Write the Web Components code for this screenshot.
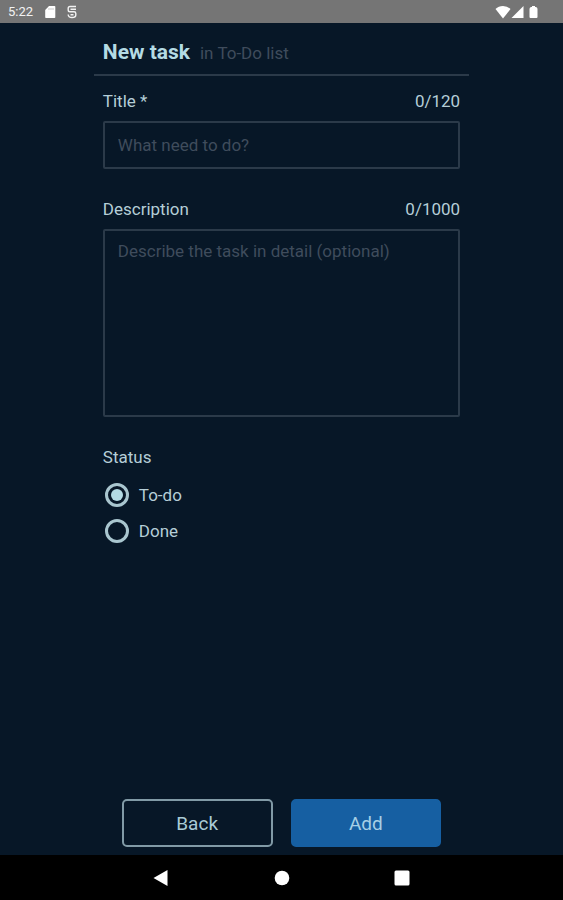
<!DOCTYPE html>
<html lang="en">
<head>
<meta charset="utf-8">
<meta name="viewport" content="width=device-width, initial-scale=1">
<title>New task</title>
<style>
	html {
		height: 100%;
	}
	body {
		margin: 0;
		height: 100%;
		background: #071727;
		color: #b5ced7;
		font: 17px/20px Roboto, "Liberation Sans", sans-serif;
		--accent: #b4dbe4;
		--muted: #3f4c5c;
		--line: #2b3a49;
		--primary: #165fa2;
	}
</style>
</head>
<body>
<task-screen>
	<status-bar slot="top" time="5:22"></status-bar>
	<page-header>New task<span slot="note">in To-Do list</span></page-header>
	<task-field label="Title *" placeholder="What need to do?" maxlength="120"></task-field>
	<task-field label="Description" placeholder="Describe the task in detail (optional)" maxlength="1000" multiline></task-field>
	<radio-list label="Status" options="To-do,Done" value="To-do"></radio-list>
	<action-button slot="actions">Back</action-button>
	<action-button slot="actions" primary>Add</action-button>
	<nav-bar slot="bottom"></nav-bar>
</task-screen>

<script>
'use strict'

class TaskScreen extends HTMLElement {
	constructor() {
		super()
		this.attachShadow({ mode: 'open' }).innerHTML = `
			<style>
				:host {
					display: flex;
					flex-direction: column;
					min-height: 100%;
				}
				main {
					flex: 1;
					display: flex;
					flex-direction: column;
					width: calc(100% * 2 / 3);
					margin: 0 auto;
				}
				.form {
					display: flex;
					flex-direction: column;
				}
				.actions {
					display: flex;
					gap: 18px;
					margin-top: auto;
					padding: 24px 28px 8px;
				}
			</style>
			<slot name="top"></slot>
			<main>
				<div class="form"><slot></slot></div>
				<div class="actions"><slot name="actions"></slot></div>
			</main>
			<slot name="bottom"></slot>`
	}
}

class StatusBar extends HTMLElement {
	constructor() {
		super()
		this.attachShadow({ mode: 'open' }).innerHTML = `
			<style>
				:host {
					display: flex;
					align-items: center;
					justify-content: space-between;
					height: 23px;
					padding: 0 24px 0 8px;
					background: #757575;
					color: #f2f2f2;
					font-size: 13px;
				}
				div {
					display: flex;
					align-items: center;
				}
				svg {
					display: block;
					fill: #fff;
				}
				.notices {
					gap: 11px;
				}
			</style>
			<div class="notices">
				<time></time>
				<svg width="12" height="14" viewBox="0 0 12 14"><path d="M5 1h5.500q.8 0 .8.800v10.400q0 .8-.8.800h-8.500q-.8 0-.8-.800v-7.200z"/><path d="M5 3v2M7 3v2M9 3v2" stroke="#bbb" stroke-width=".8"/></svg>
				<svg width="10" height="14" viewBox="0 0 10 14"><path d="M9 1.500H3Q1.200 1.500 1.200 3.300V5Q1.200 6.800 3 6.800H7Q8.800 6.800 8.800 8.500V10Q8.800 12.500 5 12.500T1.200 9.500M3.500 4.200H9M3.500 9.700H6.500" fill="none" stroke="#f2f2f2" stroke-width="1.400"/></svg>
			</div>
			<div>
				<svg width="16" height="14" viewBox="0 0 16 14"><path d="M8 13.500 0.500 4Q3.500 1 8 1t7.500 3z"/></svg>
				<svg width="13" height="14" viewBox="0 0 13 14"><path d="M12.500 1v12H.5z"/></svg>
				<svg width="15" height="14" viewBox="0 0 15 14"><path d="M8 1h3v1h1q1.500.3 1.500 2v8q0 1-1 1h-6q-1 0-1-1V4q0-1.700 1.500-2h1z"/></svg>
			</div>`
	}

	connectedCallback() {
		this.shadowRoot.querySelector('time').textContent = this.getAttribute('time')
	}
}

class PageHeader extends HTMLElement {
	constructor() {
		super()
		this.attachShadow({ mode: 'open' }).innerHTML = `
			<style>
				:host {
					display: block;
					border-bottom: 2px solid var(--line);
				}
				header {
					display: flex;
					align-items: baseline;
					gap: 10px;
					padding: 17px 9px 9px;
					line-height: 24px;
				}
				h1 {
					margin: 0;
					color: var(--accent);
					font-size: 21px;
					font-weight: 700;
				}
				.note {
					color: var(--muted);
				}
			</style>
			<header>
				<h1><slot></slot></h1>
				<span class="note"><slot name="note"></slot></span>
			</header>`
	}
}

class TaskField extends HTMLElement {
	constructor() {
		super()
		this.attachShadow({ mode: 'open' }).innerHTML = `
			<style>
				* {
					box-sizing: border-box;
				}
				:host {
					display: block;
					padding: 15px 9px;
				}
				.head {
					display: flex;
					justify-content: space-between;
					margin-bottom: 10px;
				}
				input, textarea {
					display: block;
					width: 100%;
					height: 48px;
					margin: 0;
					padding: 0 13px;
					border: 2px solid var(--line);
					border-radius: 2px;
					outline: none;
					background: none;
					color: inherit;
					font: inherit;
				}
				textarea {
					height: 188px;
					padding: 10px 13px;
					resize: none;
				}
				:focus {
					border-color: var(--accent);
				}
				::placeholder {
					color: var(--muted);
					opacity: 1;
				}
			</style>
			<div class="head">
				<label for="control"></label>
				<output for="control"></output>
			</div>`
	}

	#control

	#updateCount() {
		this.shadowRoot.querySelector('output').textContent = `${this.#control.value.length}/${this.getAttribute('maxlength')}`
	}

	connectedCallback() {
		if (this.#control) {
			return
		}
		this.#control = document.createElement(this.hasAttribute('multiline') ? 'textarea' : 'input')
		this.#control.id = 'control'
		this.#control.placeholder = this.getAttribute('placeholder')
		this.#control.maxLength = this.getAttribute('maxlength')
		this.#control.addEventListener('input', () => this.#updateCount())
		this.shadowRoot.querySelector('label').textContent = this.getAttribute('label')
		this.shadowRoot.append(this.#control)
		this.#updateCount()
	}
}

class RadioList extends HTMLElement {
	constructor() {
		super()
		this.attachShadow({ mode: 'open' }).innerHTML = `
			<style>
				:host {
					display: block;
					padding: 15px 9px;
				}
				fieldset {
					min-width: 0;
					margin: 0;
					padding: 0;
					border: 0;
				}
				legend {
					padding: 0;
					margin-bottom: 10px;
				}
				label {
					display: flex;
					align-items: center;
					gap: 10px;
					height: 36px;
					padding-left: 2px;
				}
				input {
					appearance: none;
					display: grid;
					place-items: center;
					box-sizing: border-box;
					width: 24px;
					height: 24px;
					margin: 0;
					border: 3px solid #a9c6cf;
					border-radius: 50%;
				}
				input:checked::before {
					content: "";
					width: 12px;
					height: 12px;
					border-radius: 50%;
					background: var(--accent);
				}
			</style>
			<fieldset><legend></legend></fieldset>`
	}

	connectedCallback() {
		const fieldset = this.shadowRoot.querySelector('fieldset')
		fieldset.firstChild.textContent = this.getAttribute('label')
		for (const option of this.getAttribute('options').split(',')) {
			const label = document.createElement('label')
			const input = document.createElement('input')
			input.type = 'radio'
			input.name = 'option'
			input.value = option
			input.checked = option === this.getAttribute('value')
			label.append(input, option)
			fieldset.append(label)
		}
	}
}

class ActionButton extends HTMLElement {
	constructor() {
		super()
		this.attachShadow({ mode: 'open' }).innerHTML = `
			<style>
				:host {
					display: block;
					flex: 1;
				}
				button {
					display: block;
					box-sizing: border-box;
					width: 100%;
					height: 48px;
					padding: 2px 0 0;
					border: 2px solid #819aa6;
					border-radius: 5px;
					background: none;
					color: #a9cbd6;
					font: inherit;
					font-size: 19px;
					cursor: pointer;
				}
				:host([primary]) button {
					border-color: var(--primary);
					background: var(--primary);
					color: #a6cfe6;
				}
			</style>
			<button type="button"><slot></slot></button>`
	}
}

class NavBar extends HTMLElement {
	constructor() {
		super()
		this.attachShadow({ mode: 'open' }).innerHTML = `
			<style>
				:host {
					display: block;
				}
				nav {
					display: flex;
					align-items: center;
					justify-content: center;
					gap: 96px;
					height: 45px;
					background: #000;
				}
				button {
					width: 24px;
					height: 24px;
					padding: 0;
					border: 0;
					background: none;
				}
				svg {
					display: block;
					fill: #fff;
				}
			</style>
			<nav>
				<button type="button" aria-label="Back"><svg width="24" height="24"><path d="M3.500 12 17.500 4v16z"/></svg></button>
				<button type="button" aria-label="Home"><svg width="24" height="24"><circle cx="12" cy="12" r="7.300"/></svg></button>
				<button type="button" aria-label="Recent"><svg width="24" height="24"><rect x="4.500" y="4.500" width="15" height="15" rx="1.500"/></svg></button>
			</nav>`
	}
}

customElements.define('task-screen', TaskScreen)
customElements.define('status-bar', StatusBar)
customElements.define('page-header', PageHeader)
customElements.define('task-field', TaskField)
customElements.define('radio-list', RadioList)
customElements.define('action-button', ActionButton)
customElements.define('nav-bar', NavBar)
</script>
</body>
</html>
